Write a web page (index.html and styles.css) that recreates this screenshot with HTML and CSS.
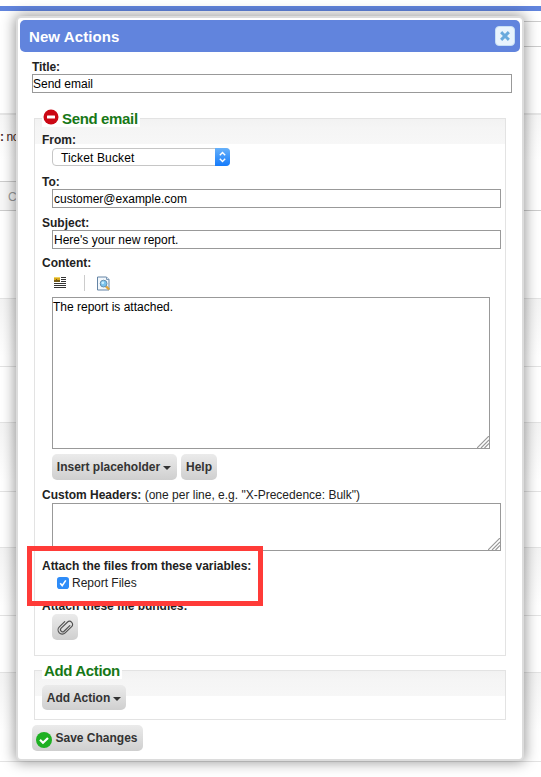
FILE: index.html
```html
<!DOCTYPE html>
<html lang="en">
<head>
<meta charset="utf-8">
<title>New Actions</title>
<link rel="stylesheet" href="styles.css">
</head>
<body>
<div class="page">
  <div class="topbar"></div>
  <div class="tabs"><div class="tab"></div></div>
  <div class="filters"><b>:</b> no</div>
  <div class="search-line"><div class="search">C</div><div class="rule"></div></div>
  <div class="blank"></div>
  <div class="row shaded tall"></div>
  <div class="row"></div>
  <div class="row shaded"></div>
  <div class="row"></div>
  <div class="row shaded mid"></div>
  <div class="row mid-plain"></div>
  <div class="row shaded last"></div>
  <div class="row end"></div>
</div>

<div class="dialog">
  <div class="header">
    <span class="heading">New Actions</span>
    <span class="close"><svg width="12" height="12" viewBox="0 0 12 12"><path d="M3.2 3.2 8.8 8.8M8.8 3.2 3.2 8.8" stroke="#69aadd" stroke-width="3" stroke-linecap="square"/></svg></span>
  </div>
  <div class="content">
    <div class="label title">Title:</div>
    <input class="text-input" type="text" value="Send email">

    <section class="panel email">
      <div class="legend">
        <svg width="16" height="16" viewBox="0 0 16 16"><circle cx="8" cy="8" r="7.5" fill="#cb0714"/><rect x="4" y="6.5" width="8" height="3" rx=".5" fill="#fff"/></svg>
        <span class="legend-text">Send email</span>
      </div>
      <div class="label from">From:</div>
      <div class="select"><span>Ticket Bucket</span>
        <span class="stepper"><svg width="15" height="18" viewBox="0 0 15 18"><path d="M4.8 7.3 7.5 4.6 10.2 7.3M4.8 10.7 7.5 13.4 10.2 10.7" fill="none" stroke="#fff" stroke-width="1.4"/></svg></span>
      </div>
      <div class="label to">To:</div>
      <input class="text-input nested" type="text" value="customer@example.com">
      <div class="label subject">Subject:</div>
      <input class="text-input nested" type="text" value="Here's your new report.">
      <div class="label body-label">Content:</div>
      <div class="toolbar">
        <svg width="14" height="13" viewBox="0 0 14 13"><path d="M1 0h6v5H1z" fill="#d9a91c"/><path d="M1 0h6v1H1z" fill="#efd35e"/><path d="M1 3h2V2h1v1h3v2H1z" fill="#765c16"/><path d="M8 .5h5M8 2.5h5M8 4.5h5M1 6.5h12M1 8.5h12M1 10.5h12" stroke="#333"/></svg>
        <span class="divider"></span>
        <svg width="14" height="15" viewBox="0 0 14 15"><path d="M.5 1h9l2.5 2.5v10.5H.5z" fill="#f3f8fc" stroke="#6484a5"/><path d="M9.5 1v2.5h2.5" fill="#d9e6f1" stroke="#7c98b5"/><path d="m9 10.3 3.2 3.2" stroke="#dfa43b" stroke-width="2.4"/><circle cx="6.6" cy="7.6" r="3.4" fill="#79c2ec" stroke="#648eae"/><circle cx="5.8" cy="6.8" r="1.4" fill="#c8edff"/></svg>
      </div>
      <div class="area message">The report is attached.
        <svg class="grip" width="12" height="12" viewBox="0 0 12 12"><path d="M0 12 12 0M4 12 12 4M7.5 12 12 7.5" stroke="#999" stroke-width="1.2"/></svg>
      </div>
      <div class="buttons">
        <button class="btn insert">Insert placeholder<i class="caret"></i></button>
        <button class="btn help">Help</button>
      </div>
      <div class="label custom">Custom Headers: <span class="hint">(one per line, e.g. "X-Precedence: Bulk")</span></div>
      <div class="area headers">
        <svg class="grip" width="12" height="12" viewBox="0 0 12 12"><path d="M0 12 12 0M4 12 12 4M7.5 12 12 7.5" stroke="#999" stroke-width="1.2"/></svg>
      </div>
      <div class="label files">Attach the files from these variables:</div>
      <div class="check">
        <svg width="12" height="12" viewBox="0 0 12 12"><rect width="12" height="12" rx="2.8" fill="#2e8cf8"/><path d="m3.2 6.3 2 2.3 3.6-5.2" fill="none" stroke="#fff" stroke-width="1.6"/></svg>
        <span>Report Files</span>
      </div>
      <div class="label bundles">Attach these file bundles:</div>
      <button class="btn clip"><svg width="18" height="18" viewBox="0 0 18 18"><path transform="rotate(46 9 9)" d="M11.4 4.6v8a2.1 2.1 0 0 1-4.2 0V4a3.1 3.1 0 0 1 6.2 0v9a4.2 4.2 0 0 1-8.4 0V5.5" fill="none" stroke="#505050" stroke-width="1.15" stroke-linecap="round"/></svg></button>
    </section>

    <section class="panel add">
      <div class="legend"><span class="legend-text">Add Action</span></div>
      <button class="btn add-btn">Add Action<i class="caret"></i></button>
    </section>

    <button class="btn save"><svg width="16" height="16" viewBox="0 0 16 16"><circle cx="8" cy="8" r="8" fill="#1eb022"/><path d="m4 7.8 3 3L12 6" fill="none" stroke="#fff" stroke-width="2.2"/></svg><span>Save Changes</span></button>
  </div>
</div>
<div class="highlight"></div>
</body>
</html>
```
FILE: styles.css
```css
* { box-sizing: border-box; }
body {
  margin: 0;
  width: 541px;
  height: 777px;
  overflow: hidden;
  background: #fff;
  color: #222;
  font: 12px/14px "Liberation Sans", Arial, sans-serif;
}
.page { height: 777px; padding-top: 6px; overflow: hidden; }
.topbar { height: 5px; background: #6184dd; }
.tabs { height: 104px; padding-top: 10px; border-bottom: 2px solid #e6e6e6; }
.tab { width: 100px; height: 26px; margin-left: auto; border: solid #ccc; border-width: 1px 0; }
.filters { height: 66px; padding-top: 15px; color: #422; letter-spacing: -.4px; background: linear-gradient(#f7f7f7, #fff 45px); }
.search-line { display: flex; justify-content: space-between; height: 30px; }
.search { width: 30px; height: 30px; padding: 8px; color: #999; background: #f7f7f7; border: solid #ccc; border-width: 1px 0; }
.rule { width: 100px; border-bottom: 1px solid #ccc; }
.blank { height: 87px; }
.row { height: 56px; border-top: 1px solid #e3e3e3; }
.row.shaded { height: 69px; background: linear-gradient(#f4f4f4, #fff 58px); }
.row.tall { height: 68px; }
.row.shaded.mid { height: 68px; }
.row.mid-plain { height: 57px; }
.row.shaded.last { height: 89px; }
.row.end { height: 15px; }

.dialog {
  position: absolute;
  left: 16px;
  top: 16px;
  width: 508px;
  height: 745px;
  padding: 2px;
  background: #fff;
  border: 2px solid #dcdcdc;
  border-radius: 5px;
  box-shadow: 0 0 14px 1px rgba(0, 0, 0, .42);
}
.header {
  display: flex;
  align-items: center;
  justify-content: space-between;
  height: 32px;
  padding: 0 5px 0 9px;
  background: #6184dd;
  border-radius: 5px;
}
.heading { color: #fff; font: bold 15px/18px "Liberation Sans", Arial, sans-serif; padding-top: 1px; letter-spacing: .1px; }
.close {
  display: flex;
  align-items: center;
  justify-content: center;
  width: 20px;
  height: 20px;
  background: #e9f4fd;
  border: 1px solid #c7dff4;
  border-radius: 4px;
}
.content { padding: 8px 8px 0 12px; }
.label { height: 14px; font-weight: bold; white-space: nowrap; }
.title { letter-spacing: -.1px; }
.text-input {
  display: block;
  width: 480px;
  height: 19px;
  padding: 0 1px;
  border: 1px solid #999;
  border-radius: 0;
  background: #fff;
  color: #000;
  font: 12px/17px "Liberation Sans", Arial, sans-serif;
}
.content > .text-input { padding-left: 0; }
.nested { width: 449px; margin-left: 10px; }
.panel {
  width: 472px;
  margin-left: 2px;
  padding-left: 7px;
  border: 1px solid #e3e3e3;
  background: linear-gradient(#f2f2f2, #f5f5f5 9px, #f7f7f7 25px, #fff 25px);
}
.email { height: 538px; margin-top: 25px; }
.add { height: 50px; margin-top: 14px; }
.legend { display: flex; height: 20px; width: 98px; margin-top: -10px; padding-left: 1px; background: linear-gradient(#fff 18px, transparent 18px); }
.legend svg { flex: none; }
.legend-text { color: #177817; font: bold 15px/18px "Liberation Sans", Arial, sans-serif; letter-spacing: -.35px; white-space: nowrap; }
.email .legend-text { margin: 1px 0 0 3px; }
.add .legend { width: 80px; padding: 1px 0 0 2px; }
.from { margin-top: 4px; }
.select {
  display: flex;
  justify-content: space-between;
  width: 178px;
  height: 18px;
  margin: 1px 0 0 10px;
  padding-left: 8px;
  border: 1px solid #c6c6c6;
  border-radius: 4px;
  background: #fff;
  color: #000;
  line-height: 18px;
  letter-spacing: .15px;
}
.stepper { width: 15px; height: 18px; margin: -1px -1px 0 0; border-radius: 0 4px 4px 0; background: linear-gradient(#67b1fa, #147bfb); }
.stepper svg { display: block; }
.to { margin-top: 9px; }
.subject { margin-top: 8px; }
.body-label { margin-top: 7px; }
.toolbar { display: flex; align-items: center; height: 16px; margin: 5px 0 0 11px; }
.divider { width: 1px; height: 16px; margin: 0 12px 0 17px; background: #ccc; }
.area { position: relative; margin-left: 10px; border: 1px solid #999; background: #fff; color: #000; }
.message { width: 438px; height: 152px; margin-top: 6px; padding-top: 2px; }
.headers { width: 449px; height: 48px; margin-top: 1px; }
.grip { position: absolute; right: 0; bottom: 0; }
.buttons { display: flex; gap: 4px; margin: 5px 0 0 10px; }
.btn {
  display: flex;
  align-items: center;
  justify-content: center;
  height: 26px;
  padding: 0;
  border: 0;
  border-radius: 5px;
  background: linear-gradient(#ebebeb, #cfcfcf);
  color: #333;
  font: bold 12px/14px "Liberation Sans", Arial, sans-serif;
  white-space: nowrap;
}
.caret { margin: 2px 0 0 3px; border: solid transparent; border-width: 4px 4px 0; border-top-color: #333; }
.insert { width: 125px; padding-right: 1px; }
.help { width: 36px; }
.custom { margin-top: 8px; }
.hint { font-weight: normal; }
.files { margin-top: 8px; letter-spacing: -.02px; }
.check { display: flex; align-items: center; gap: 3px; height: 14px; margin: 3px 0 0 15px; }
.bundles { margin-top: 9px; letter-spacing: -.02px; }
.clip { width: 26px; margin: 1px 0 0 10px; }
.add-btn { width: 84px; height: 25px; margin-top: 4px; }
.save { width: 111px; margin-top: 5px; padding-right: 1px; gap: 3px; }
.save svg { margin-top: 3px; }
.highlight { position: absolute; left: 27px; top: 546px; width: 236px; height: 60px; border: 5px solid #ff3b38; }
```
